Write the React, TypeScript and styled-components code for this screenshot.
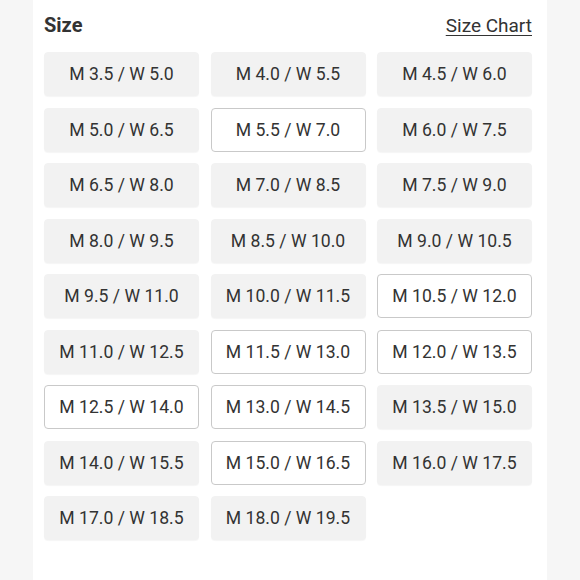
import React from 'react';
import styled, { createGlobalStyle } from 'styled-components';

const GlobalStyle = createGlobalStyle`
  html, body {
    margin: 0;
    padding: 0;
    background: #f6f6f6;
  }
  body {
    font-family: Roboto, "Noto Sans", "Liberation Sans", sans-serif;
    color: #333;
  }
`;

export const Page = styled.div`
  width: 580px;
  height: 580px;
  display: flex;
  justify-content: flex-start;
  overflow: hidden;
`;

export const Panel = styled.div`
  margin-left: 33px;
  width: 514px;
  height: 580px;
  background: #fff;
  box-sizing: border-box;
  padding: 12px 15px 0 11px;
`;

export const Header = styled.div`
  display: flex;
  align-items: center;
  justify-content: space-between;
  height: 26px;
  margin-bottom: 14px;
`;

export const Title = styled.h2`
  margin: 0;
  font-size: 20px;
  font-weight: 700;
  color: #333;
`;

export const ChartLink = styled.a`
  font-size: 19px;
  color: #333;
  text-decoration: underline;
  text-underline-offset: 3px;
  text-decoration-thickness: 1px;
  cursor: pointer;
`;

export const SizeGrid = styled.div`
  display: grid;
  grid-template-columns: repeat(3, 155px);
  column-gap: 11.5px;
  row-gap: 11.5px;
`;

export const SizeButton = styled.button<{ $outlined?: boolean }>`
  height: 44px;
  box-sizing: border-box;
  border-radius: 4px;
  border: 1px solid ${p => (p.$outlined ? '#c9c9c9' : '#f2f2f2')};
  background: ${p => (p.$outlined ? '#fff' : '#f2f2f2')};
  box-shadow: ${p => (p.$outlined ? 'none' : '0 1px 1px rgba(0, 0, 0, 0.04)')};
  font-family: Roboto, "Noto Sans", "Liberation Sans", sans-serif;
  font-size: 17.6px;
  color: #333;
  padding: 0;
  cursor: pointer;
`;

const sizes: [string, string][] = [
  ['3.5', '5.0'], ['4.0', '5.5'], ['4.5', '6.0'],
  ['5.0', '6.5'], ['5.5', '7.0'], ['6.0', '7.5'],
  ['6.5', '8.0'], ['7.0', '8.5'], ['7.5', '9.0'],
  ['8.0', '9.5'], ['8.5', '10.0'], ['9.0', '10.5'],
  ['9.5', '11.0'], ['10.0', '11.5'], ['10.5', '12.0'],
  ['11.0', '12.5'], ['11.5', '13.0'], ['12.0', '13.5'],
  ['12.5', '14.0'], ['13.0', '14.5'], ['13.5', '15.0'],
  ['14.0', '15.5'], ['15.0', '16.5'], ['16.0', '17.5'],
  ['17.0', '18.5'], ['18.0', '19.5'],
];

// sizes that show with the white outlined style
const outlined = ['5.5', '10.5', '11.5', '12.0', '12.5', '13.0', '15.0'];

export default function App() {
  return (
    <>
      <GlobalStyle />
      <Page>
        <Panel>
          <Header>
            <Title>Size</Title>
            <ChartLink>Size Chart</ChartLink>
          </Header>
          <SizeGrid>
            {sizes.map(([m, w]) => (
              <SizeButton key={m} $outlined={outlined.includes(m)}>
                M {m} / W {w}
              </SizeButton>
            ))}
          </SizeGrid>
        </Panel>
      </Page>
    </>
  );
}
